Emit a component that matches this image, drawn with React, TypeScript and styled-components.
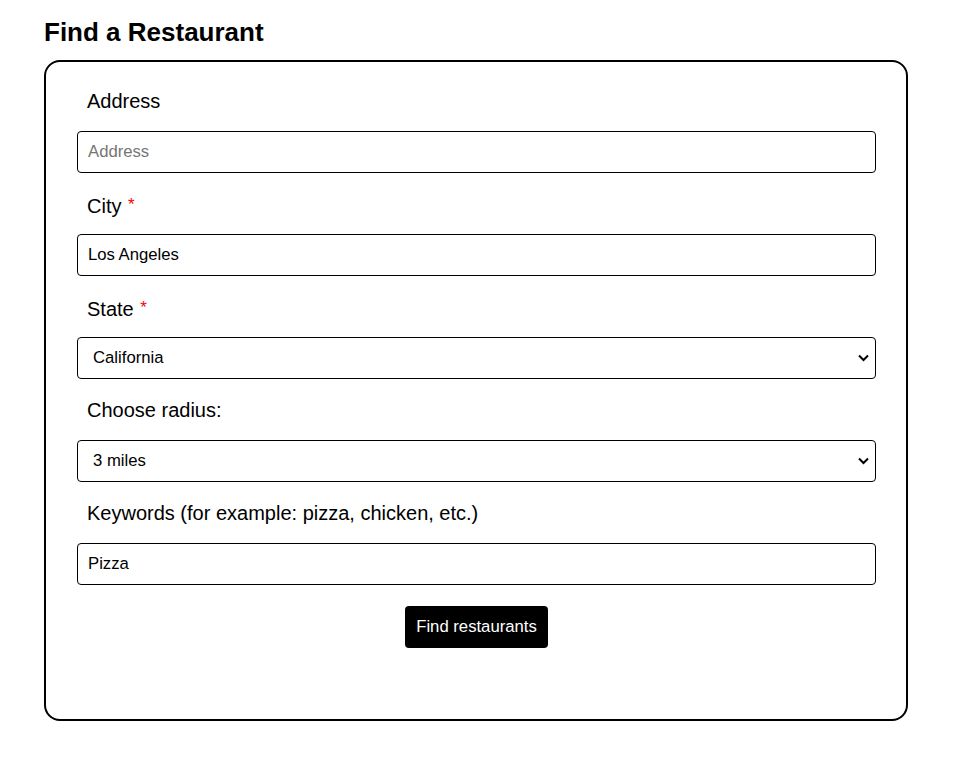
import React from "react";
import styled, { createGlobalStyle } from "styled-components";

const Global = createGlobalStyle`
  html, body { margin: 0; padding: 0; background: #fff; }
  body { font-family: "Liberation Sans", Arial, sans-serif; color: #000; }
`;

const Page = styled.div`
  padding: 17px 52px 40px 44px;
  width: 864px;
`;

const Title = styled.h1`
  margin: 0 0 12px 0;
  font-size: 26px;
  font-weight: 700;
  line-height: 31px;
`;

const Card = styled.form`
  border: 2px solid #000;
  border-radius: 16px;
  padding: 8px 30px 71px 31px;
  display: flex;
  flex-direction: column;
`;

const Label = styled.label`
  display: block;
  box-sizing: border-box;
  padding: 3px 10px 0;
  font-size: 20px;
  line-height: 57.5px;
  height: 60.5px;
`;

const Req = styled.span`
  color: red;
  font-size: 17px;
  vertical-align: 3px;
  margin-left: 1px;
`;

const Input = styled.input`
  box-sizing: border-box;
  width: 100%;
  height: 42.5px;
  border: 1px solid #000;
  border-radius: 4px;
  padding: 0 10px;
  font-family: "Liberation Sans", Arial, sans-serif;
  font-size: 16.7px;
  color: #000;
  outline: none;
  &::placeholder { color: #757575; }
`;

const SelectWrap = styled.div`
  position: relative;
`;

const Select = styled.select`
  box-sizing: border-box;
  display: block;
  width: 100%;
  height: 42.5px;
  border: 1px solid #000;
  border-radius: 4px;
  padding: 0 30px 0 15px;
  font-family: "Liberation Sans", Arial, sans-serif;
  font-size: 16.7px;
  color: #000;
  background: #fff;
  appearance: none;
  -webkit-appearance: none;
  outline: none;
`;

const Chevron = styled.svg`
  position: absolute;
  right: 7px;
  top: 50%;
  margin-top: -4px;
  width: 11px;
  height: 8px;
  pointer-events: none;
`;

const ButtonRow = styled.div`
  display: flex;
  justify-content: center;
  margin-top: 21px;
`;

const Button = styled.button`
  height: 42px;
  padding: 0 11px;
  background: #000;
  color: #fff;
  border: none;
  border-radius: 4px;
  font-family: "Liberation Sans", Arial, sans-serif;
  font-size: 16.7px;
  cursor: pointer;
`;

const ChevronIcon = () => (
  <Chevron viewBox="0 0 11 8" aria-hidden="true">
    <path d="M1 1.5 L5.5 6 L10 1.5" fill="none" stroke="#000" strokeWidth="2" />
  </Chevron>
);

export default function App() {
  return (
    <Page>
      <Global />
      <Title>Find a Restaurant</Title>
      <Card onSubmit={(e) => e.preventDefault()}>
        <Label htmlFor="address">Address</Label>
        <Input id="address" placeholder="Address" />
        <Label htmlFor="city">
          City <Req>*</Req>
        </Label>
        <Input id="city" defaultValue="Los Angeles" />
        <Label htmlFor="state">
          State <Req>*</Req>
        </Label>
        <SelectWrap>
          <Select id="state" defaultValue="California">
            <option>California</option>
            <option>Nevada</option>
            <option>Oregon</option>
          </Select>
          <ChevronIcon />
        </SelectWrap>
        <Label htmlFor="radius">Choose radius:</Label>
        <SelectWrap>
          <Select id="radius" defaultValue="3 miles">
            <option>1 mile</option>
            <option>3 miles</option>
            <option>5 miles</option>
          </Select>
          <ChevronIcon />
        </SelectWrap>
        <Label htmlFor="keywords">Keywords (for example: pizza, chicken, etc.)</Label>
        <Input id="keywords" defaultValue="Pizza" />
        <ButtonRow>
          <Button type="submit">Find restaurants</Button>
        </ButtonRow>
      </Card>
    </Page>
  );
}
